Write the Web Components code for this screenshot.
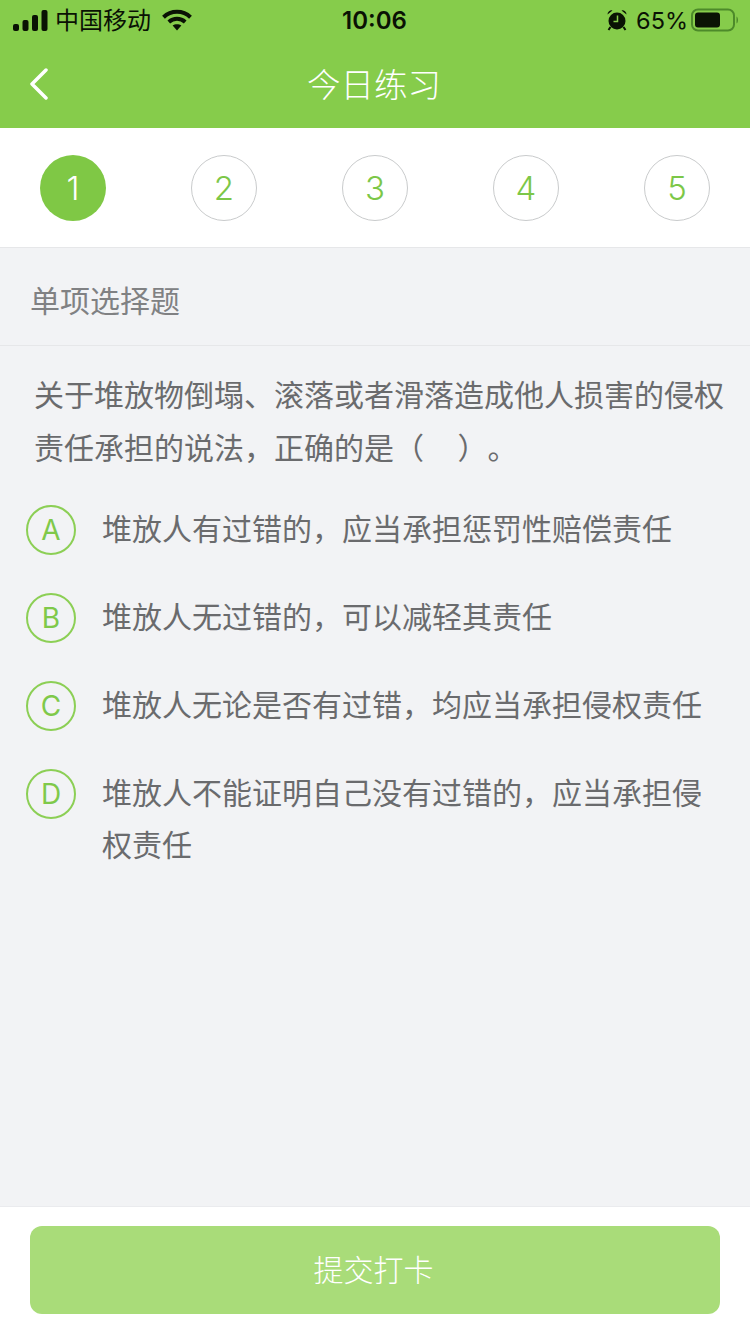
<!DOCTYPE html>
<html lang="zh">
<head>
<meta charset="utf-8">
<style>
    html, body {
        margin: 0;
        height: 100%;
    }
    body {
        font-family: "Liberation Sans", "Noto Sans CJK SC", sans-serif;
    }
</style>
</head>
<body>
<quiz-page>
    <status-bar slot="top"></status-bar>
    <nav-bar slot="top">今日练习</nav-bar>
    <step-row slot="top" total="5" current="1"></step-row>
    <section-head>单项选择题</section-head>
    <quiz-question>关于堆放物倒塌、滚落或者滑落造成他人损害的侵权责任承担的说法，正确的是（&nbsp;&nbsp;&nbsp;&nbsp;&nbsp;）。</quiz-question>
    <quiz-option letter="A">堆放人有过错的，应当承担惩罚性赔偿责任</quiz-option>
    <quiz-option letter="B">堆放人无过错的，可以减轻其责任</quiz-option>
    <quiz-option letter="C">堆放人无论是否有过错，均应当承担侵权责任</quiz-option>
    <quiz-option letter="D">堆放人不能证明自己没有过错的，应当承担侵权责任</quiz-option>
    <submit-bar slot="bottom">提交打卡</submit-bar>
</quiz-page>

<script>
class QuizPage extends HTMLElement {
    constructor() {
        super();
        this.attachShadow({mode: "open"}).innerHTML = `
            <style>
                :host {
                    display: flex;
                    flex-direction: column;
                    height: 1334px;
                    background: #f2f3f5;
                }
                #body {
                    flex: 1;
                }
            </style>
            <slot name="top"></slot>
            <div id="body"><slot></slot></div>
            <slot name="bottom"></slot>
        `;
    }
}

class StatusBar extends HTMLElement {
    constructor() {
        super();
        this.attachShadow({mode: "open"}).innerHTML = `
            <style>
                :host {
                    display: grid;
                    grid-template-columns: 1fr auto 1fr;
                    align-items: center;
                    height: 40px;
                    padding: 0 11px 0 13px;
                    background: #86cc4b;
                    color: #0a1204;
                    font-family: "Liberation Sans", "Noto Sans CJK SC", sans-serif;
                }
                .side {
                    display: flex;
                    align-items: center;
                }
                .right {
                    justify-content: flex-end;
                }
                .carrier {
                    font-size: 24px;
                    margin: 0 11px 3px 7px;
                }
                .time {
                    font-family: Inter, "Liberation Sans", sans-serif;
                    font-size: 24px;
                    font-weight: 600;
                    margin-right: 3px;
                }
                .pct {
                    font-family: Inter, "Liberation Sans", sans-serif;
                    font-size: 23.500px;
                    margin: 0 3px 0 8px;
                }
                svg {
                    display: block;
                }
            </style>
            <div class="side">
                <svg width="35" height="21" viewBox="0 0 35 21">
                    <rect x="0" y="14" width="6" height="7" rx="2" fill="#0a1204"/>
                    <rect x="9.500" y="10" width="6" height="11" rx="2" fill="#0a1204"/>
                    <rect x="19" y="5" width="6" height="16" rx="2" fill="#0a1204"/>
                    <rect x="28.500" y="0" width="6" height="21" rx="2" fill="#0a1204"/>
                </svg>
                <span class="carrier">中国移动</span>
                <svg width="30" height="22" viewBox="0 0 30 22" fill="none" stroke="#0a1204">
                    <path d="M1.500 8.200C9 1 21 1 28.500 8.200" stroke-width="4"/>
                    <path d="M6.800 13C11.500 8.800 18.500 8.800 23.200 13" stroke-width="4"/>
                    <path d="M15 21.500L10.600 16.600C13 14.700 17 14.700 19.400 16.600Z" fill="#0a1204" stroke="none"/>
                </svg>
            </div>
            <span class="time">10:06</span>
            <div class="side right">
                <svg width="22" height="22" viewBox="0 0 22 22">
                    <circle cx="11" cy="12" r="8.500" fill="#0a1204"/>
                    <path d="M1.500 5.500A4 4 0 0 1 6.500 1.500ZM20.500 5.500A4 4 0 0 0 15.500 1.500Z" fill="#0a1204"/>
                    <path d="M4.500 18L2.500 21M17.500 18L19.500 21" stroke="#0a1204" stroke-width="2"/>
                    <path d="M11.500 6.500V12.500H7.500" fill="none" stroke="#86cc4b" stroke-width="1.500"/>
                </svg>
                <span class="pct">65%</span>
                <svg width="48" height="24" viewBox="0 0 48 24">
                    <rect x="1" y="1.500" width="42" height="21" rx="6" fill="none" stroke="#4d8a2a" stroke-width="2"/>
                    <rect x="4" y="4.500" width="25" height="15" rx="3" fill="#0a1204"/>
                    <path d="M45.500 8.500C47.500 9.500 47.500 14.500 45.500 15.500Z" fill="#4d8a2a"/>
                </svg>
            </div>
        `;
    }
}

class NavBar extends HTMLElement {
    constructor() {
        super();
        this.attachShadow({mode: "open"}).innerHTML = `
            <style>
                :host {
                    display: flex;
                    align-items: center;
                    justify-content: center;
                    position: relative;
                    box-sizing: border-box;
                    height: 88px;
                    padding: 0 2px 4px 0;
                    background: #86cc4b;
                    color: #fff;
                    font-size: 33.500px;
                    font-family: "Noto Sans CJK SC", sans-serif;
                    font-weight: 300;
                }
                svg {
                    position: absolute;
                    left: 29px;
                    top: 28px;
                }
            </style>
            <svg width="20" height="32" viewBox="0 0 20 32" fill="none" stroke="#fff" stroke-width="3.500" stroke-linecap="round" stroke-linejoin="round">
                <path d="M17 2L3 16L17 30"/>
            </svg>
            <slot></slot>
        `;
    }
}

class StepRow extends HTMLElement {
    static get observedAttributes() {
        return ["total", "current"];
    }

    constructor() {
        super();
        this.attachShadow({mode: "open"}).innerHTML = `
            <style>
                :host {
                    display: flex;
                    justify-content: space-between;
                    align-items: center;
                    box-sizing: border-box;
                    height: 120px;
                    padding: 1px 40px 0 40px;
                    background: #fff;
                    border-bottom: 1px solid #e6e7e9;
                }
                .step {
                    display: flex;
                    align-items: center;
                    justify-content: center;
                    box-sizing: border-box;
                    width: 66px;
                    height: 66px;
                    border: 1px solid #c9cbcc;
                    border-radius: 50%;
                    color: #7cc748;
                    font-size: 33px;
                    font-family: Inter, "Liberation Sans", sans-serif;
                    font-weight: 300;
                }
                .step.on {
                    background: #7fc845;
                    border: 0;
                    color: #fff;
                }
            </style>
            <div id="steps" style="display: contents"></div>
        `;
        this.stepsElem = this.shadowRoot.getElementById("steps");
    }

    attributeChangedCallback() {
        const total = parseInt(this.getAttribute("total")) || 0;
        const current = parseInt(this.getAttribute("current")) || 0;
        this.stepsElem.innerHTML = "";
        for (let i = 1; i <= total; i++) {
            const step = document.createElement("div");
            step.className = i === current ? "step on" : "step";
            step.textContent = i;
            this.stepsElem.appendChild(step);
        }
    }
}

class SectionHead extends HTMLElement {
    constructor() {
        super();
        this.attachShadow({mode: "open"}).innerHTML = `
            <style>
                :host {
                    display: flex;
                    align-items: center;
                    box-sizing: border-box;
                    height: 98px;
                    padding: 4px 0 0 30px;
                    border-bottom: 1px solid #e6e7e9;
                    color: #808183;
                    font-size: 30px;
                    font-family: "Noto Sans CJK SC", sans-serif;
                    font-weight: 400;
                }
            </style>
            <slot></slot>
        `;
    }
}

class QuizQuestion extends HTMLElement {
    constructor() {
        super();
        this.attachShadow({mode: "open"}).innerHTML = `
            <style>
                :host {
                    display: block;
                    padding: 21px 20px 28px 34px;
                    color: #6a6b6d;
                    font-size: 30px;
                    line-height: 53px;
                    font-family: "Noto Sans CJK SC", sans-serif;
                    font-weight: 400;
                    text-spacing-trim: space-all;
                }
            </style>
            <slot></slot>
        `;
    }
}

class QuizOption extends HTMLElement {
    constructor() {
        super();
        this.attachShadow({mode: "open"}).innerHTML = `
            <style>
                :host {
                    display: flex;
                    align-items: flex-start;
                    gap: 26px;
                    padding: 0 30px 36px 26px;
                    color: #6a6b6d;
                    font-size: 30px;
                    line-height: 52px;
                    font-family: "Noto Sans CJK SC", sans-serif;
                    font-weight: 400;
                }
                #letter {
                    flex: none;
                    display: flex;
                    align-items: center;
                    justify-content: center;
                    box-sizing: border-box;
                    width: 50px;
                    height: 50px;
                    margin-top: 1px;
                    border: 2px solid #8ccf55;
                    border-radius: 50%;
                    color: #7fc94a;
                    font-size: 28px;
                    line-height: 1;
                    font-family: Inter, "Liberation Sans", sans-serif;
                    position: relative;
                    top: 3px;
                }
            </style>
            <div id="letter"></div>
            <div><slot></slot></div>
        `;
    }

    connectedCallback() {
        this.shadowRoot.getElementById("letter").textContent = this.getAttribute("letter");
    }
}

class SubmitBar extends HTMLElement {
    constructor() {
        super();
        this.attachShadow({mode: "open"}).innerHTML = `
            <style>
                :host {
                    display: block;
                    padding: 19px 30px 20px;
                    background: #fff;
                    border-top: 1px solid #eaebee;
                }
                #btn {
                    display: flex;
                    align-items: center;
                    justify-content: center;
                    box-sizing: border-box;
                    height: 88px;
                    padding: 0 3px 4px 0;
                    border-radius: 12px;
                    background: #a9dc79;
                    color: #fff;
                    font-size: 30px;
                    font-family: "Noto Sans CJK SC", sans-serif;
                    font-weight: 300;
                }
            </style>
            <div id="btn"><slot></slot></div>
        `;
    }
}

customElements.define("quiz-page", QuizPage);
customElements.define("status-bar", StatusBar);
customElements.define("nav-bar", NavBar);
customElements.define("step-row", StepRow);
customElements.define("section-head", SectionHead);
customElements.define("quiz-question", QuizQuestion);
customElements.define("quiz-option", QuizOption);
customElements.define("submit-bar", SubmitBar);
</script>
</body>
</html>
